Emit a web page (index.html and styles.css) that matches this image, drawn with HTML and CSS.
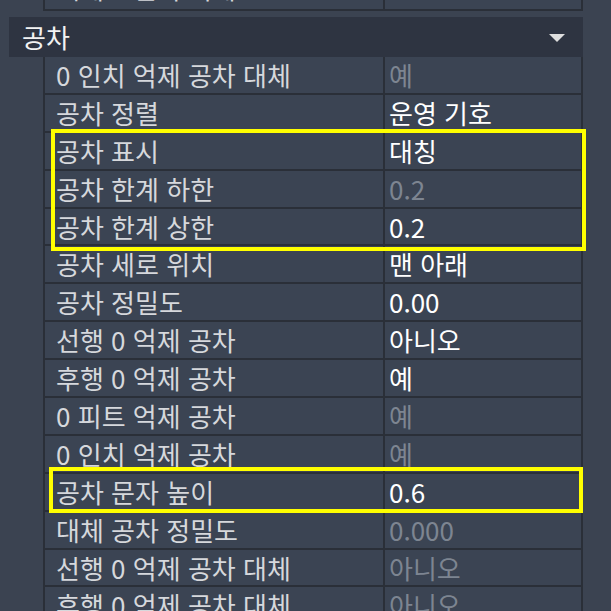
FILE: index.html
```html
<!DOCTYPE html>
<html lang="ko">
<head>
<meta charset="utf-8">
<title>공차</title>
<link rel="stylesheet" href="styles.css">
</head>
<body>
<div class="page">
  <div class="grid grid-top">
    <div class="cell label top-label">대체 0 인치 억제</div>
    <div class="cell value"></div>
  </div>

  <div class="section-header">
    <span class="section-title">공차</span>
    <span class="caret"></span>
  </div>

  <div class="grid">
    <div class="cell label">0 인치 억제 공차 대체</div><div class="cell value dim">예</div>
    <div class="cell label">공차 정렬</div><div class="cell value">운영 기호</div>
    <div class="cell label">공차 표시</div><div class="cell value">대칭</div>
    <div class="cell label">공차 한계 하한</div><div class="cell value dim">0.2</div>
    <div class="cell label">공차 한계 상한</div><div class="cell value">0.2</div>
    <div class="cell label">공차 세로 위치</div><div class="cell value">맨 아래</div>
    <div class="cell label">공차 정밀도</div><div class="cell value">0.00</div>
    <div class="cell label">선행 0 억제 공차</div><div class="cell value">아니오</div>
    <div class="cell label">후행 0 억제 공차</div><div class="cell value">예</div>
    <div class="cell label">0 피트 억제 공차</div><div class="cell value dim">예</div>
    <div class="cell label">0 인치 억제 공차</div><div class="cell value dim">예</div>
    <div class="cell label">공차 문자 높이</div><div class="cell value">0.6</div>
    <div class="cell label">대체 공차 정밀도</div><div class="cell value dim">0.000</div>
    <div class="cell label">선행 0 억제 공차 대체</div><div class="cell value dim">아니오</div>
    <div class="cell label">후행 0 억제 공차 대체</div><div class="cell value dim">아니오</div>
  </div>

  <div class="highlight highlight-a"></div>
  <div class="highlight highlight-b"></div>
</div>
</body>
</html>
```

FILE: styles.css
```css
html, body {
  margin: 0;
  padding: 0;
  background: #3b4351;
  overflow: hidden;
}

.page {
  position: relative;
  width: 611px;
  height: 611px;
  overflow: hidden;
  font-family: "Noto Sans CJK KR", "Noto Sans", sans-serif;
  font-size: 26px;
}

.grid {
  display: grid;
  grid-template-columns: 338px 196px;
  grid-auto-rows: 35.9px;
  column-gap: 2px;
  row-gap: 2px;
  padding: 0 2px 2px 2px;
  margin-left: 43px;
  width: 536px;
  background: #2a2f38;
}

.grid-top {
  margin-top: -27px;
  grid-auto-rows: 36px;
}

.cell {
  background: #3b4453;
  display: flex;
  align-items: center;
  white-space: nowrap;
  overflow: hidden;
  line-height: 1;
  box-sizing: border-box;
}

.label {
  padding-left: 11px;
  color: #d6d8dc;
}

.top-label {
  padding-bottom: 6px;
}

.value {
  padding-left: 4px;
  color: #ffffff;
}

.value.dim {
  color: #7d8591;
}

.section-header {
  margin: 6px 0 0 9px;
  width: 574px;
  height: 40px;
  background: #2e3441;
  display: flex;
  align-items: center;
  justify-content: space-between;
  box-sizing: border-box;
  padding: 0 18px 0 13px;
}

.section-title {
  color: #f2f2f2;
  line-height: 1;
}

.caret {
  width: 0;
  height: 0;
  border-left: 8px solid transparent;
  border-right: 8px solid transparent;
  border-top: 8px solid #dedede;
  margin-top: 2px;
}

.highlight {
  position: absolute;
  border: 4px solid #ffff00;
  box-sizing: border-box;
  pointer-events: none;
}

.highlight-a {
  left: 51px;
  top: 129px;
  width: 535px;
  height: 122px;
}

.highlight-b {
  left: 49px;
  top: 467px;
  width: 534px;
  height: 46px;
}
```
